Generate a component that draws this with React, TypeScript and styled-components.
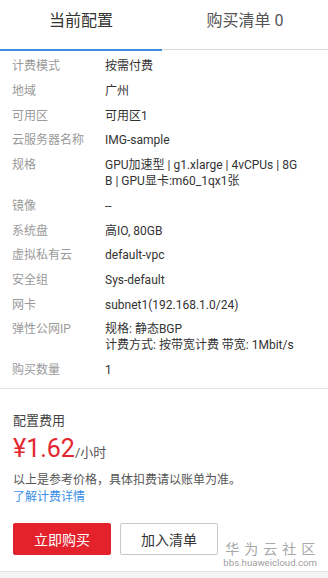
import React from "react";
import styled, { createGlobalStyle } from "styled-components";

const Global = createGlobalStyle`
  html, body { margin: 0; padding: 0; background: #fff; }
  body { font-family: Roboto, "Noto Sans CJK SC", sans-serif; }
`;

const Page = styled.div`
  width: 328px;
  height: 578px;
  position: relative;
  display: flex;
  flex-direction: column;
  background: #fff;
  overflow: hidden;
`;

const Tabs = styled.div`
  display: grid;
  grid-template-columns: 162px 1fr;
  height: 51px;
`;

const Tab = styled.div<{ $active?: boolean }>`
  display: flex;
  justify-content: center;
  padding-top: 11px;
  font-size: 16px;
  line-height: 20px;
  color: ${(p) => (p.$active ? "#333" : "#555")};
  border-bottom: ${(p) => (p.$active ? "2px solid #3d8fe0" : "1px solid #d9d9d9")};
  margin-bottom: ${(p) => (p.$active ? "0" : "1px")};
  box-sizing: border-box;
`;

const Details = styled.div`
  display: flex;
  flex-direction: column;
  padding: 3px 0 6px;
  border-bottom: 1px solid #e3e3e3;
`;

const Row = styled.div`
  display: grid;
  grid-template-columns: 93px 1fr;
  padding: 4.4px 25px 4.3px 12px;
  font-size: 12px;
  line-height: 16px;
`;

const Label = styled.div`
  color: #9a9a9a;
`;

const Value = styled.div`
  color: #333;
  word-break: break-all;
`;

const Cost = styled.div`
  display: flex;
  flex-direction: column;
  padding: 23px 13px 0;
`;

const CostTitle = styled.div`
  font-size: 13px;
  line-height: 18px;
  color: #444;
`;

const PriceLine = styled.div`
  display: flex;
  align-items: baseline;
  margin-top: 6px;
  line-height: 26px;
`;

const Price = styled.span`
  font-size: 25px;
  color: #e32731;
`;

const Unit = styled.span`
  font-size: 13px;
  color: #555;
`;

const Note = styled.div`
  margin-top: 6px;
  font-size: 12px;
  line-height: 17px;
  color: #555;
`;

const Link = styled.a`
  font-size: 12px;
  line-height: 17px;
  color: #3a8ee6;
  text-decoration: none;
`;

const Actions = styled.div`
  display: flex;
  gap: 9px;
  padding: 0 13px;
  margin-top: 17px;
`;

const Button = styled.button<{ $primary?: boolean }>`
  width: 98px;
  height: 32px;
  box-sizing: border-box;
  border-radius: 2px;
  font-family: Roboto, "Noto Sans CJK SC", sans-serif;
  font-size: 14px;
  cursor: pointer;
  border: 1px solid ${(p) => (p.$primary ? "#e3222c" : "#c8c8c8")};
  background: ${(p) => (p.$primary ? "#e3222c" : "#fff")};
  color: ${(p) => (p.$primary ? "#fff" : "#333")};
`;

const Footer = styled.div`
  margin-top: auto;
  height: 6px;
  background: #f4f4f4;
  border-top: 1px solid #e3e3e3;
`;

const Watermark = styled.div`
  position: absolute;
  right: 11px;
  bottom: 9px;
  display: flex;
  flex-direction: column;
  align-items: center;
  color: #a8a8a8;
`;

const WmTitle = styled.div`
  font-size: 14px;
  line-height: 16px;
  letter-spacing: 5px;
  margin-right: -5px;
`;

const WmUrl = styled.div`
  font-size: 9.6px;
  line-height: 12px;
  color: #a0a0a0;
`;

const rows: [string, React.ReactNode][] = [
  ["计费模式", "按需付费"],
  ["地域", "广州"],
  ["可用区", "可用区1"],
  ["云服务器名称", "IMG-sample"],
  ["规格", "GPU加速型 | g1.xlarge | 4vCPUs | 8GB | GPU显卡:m60_1qx1张"],
  ["镜像", "--"],
  ["系统盘", "高IO, 80GB"],
  ["虚拟私有云", "default-vpc"],
  ["安全组", "Sys-default"],
  ["网卡", "subnet1(192.168.1.0/24)"],
  [
    "弹性公网IP",
    <>
      规格: 静态BGP
      <br />
      计费方式: 按带宽计费 带宽: 1Mbit/s
    </>,
  ],
  ["购买数量", "1"],
];

export default function App() {
  return (
    <Page>
      <Global />
      <Tabs>
        <Tab $active>当前配置</Tab>
        <Tab>购买清单 0</Tab>
      </Tabs>
      <Details>
        {rows.map(([k, v]) => (
          <Row key={k}>
            <Label>{k}</Label>
            <Value>{v}</Value>
          </Row>
        ))}
      </Details>
      <Cost>
        <CostTitle>配置费用</CostTitle>
        <PriceLine>
          <Price>¥1.62</Price>
          <Unit>/小时</Unit>
        </PriceLine>
        <Note>以上是参考价格，具体扣费请以账单为准。</Note>
        <Link href="#">了解计费详情</Link>
      </Cost>
      <Actions>
        <Button $primary>立即购买</Button>
        <Button>加入清单</Button>
      </Actions>
      <Footer />
      <Watermark>
        <WmTitle>华为云社区</WmTitle>
        <WmUrl>bbs.huaweicloud.com</WmUrl>
      </Watermark>
    </Page>
  );
}
